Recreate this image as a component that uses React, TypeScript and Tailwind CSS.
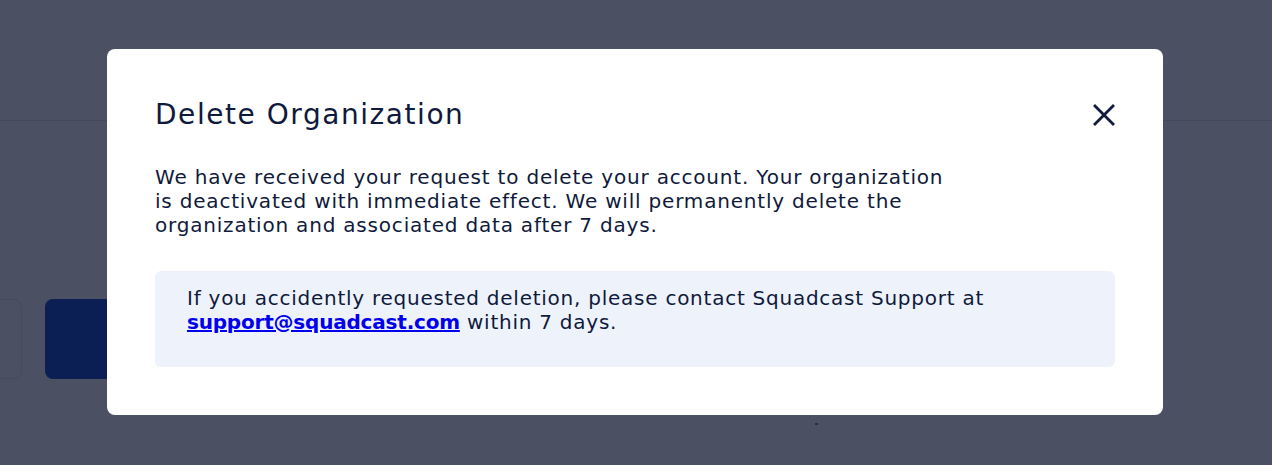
export default function App() {
  return (
    <div className="relative w-[1272px] h-[465px] overflow-hidden bg-[#4b5063] font-['DejaVu_Sans',sans-serif]">
      {/* page behind the overlay */}
      <div className="h-[121px] border-b border-[#444a5b]" />
      <div className="flex gap-[23px] pt-[178px] -ml-[60px]">
        <div className="w-[82px] h-[80px] rounded-[8px] border border-[#454a5c]" />
        <div className="w-[200px] h-[80px] rounded-[8px] bg-[#0b1f55]" />
      </div>
      <div className="absolute left-[815px] top-[423px] w-[3px] h-[2px] bg-[#2c3140]" />

      {/* modal */}
      <div className="absolute left-[107px] top-[49px] w-[1056px] h-[366px] rounded-[8px] bg-white px-[48px] pt-[48px]">
        <div className="flex items-center justify-between">
          <h2 className="text-[28px] leading-[36px] tracking-[1.55px] text-[#0f1a3c]">Delete Organization</h2>
          <button className="text-[#0f1a3c]">
            <svg width="22" height="22" viewBox="0 0 22 22" fill="none" stroke="currentColor" strokeWidth="2.8" strokeLinecap="square">
              <path d="M2 2l18 18M20 2L2 20" />
            </svg>
          </button>
        </div>
        <p className="mt-[32px] text-[20px] leading-[24px] tracking-[0.8px] text-[#0f1a3c]">
          We have received your request to delete your account. Your organization
          <br />
          is deactivated with immediate effect. We will permanently delete the
          <br />
          organization and associated data after 7 days.
        </p>
        <div className="mt-[34px] rounded-[6px] bg-[#eef3fb] pl-[32px] pr-[32px] pt-[15px] pb-[33px] text-[20px] leading-[24px] tracking-[0.75px] text-[#0f1a3c]">
          If you accidently requested deletion, please contact Squadcast Support at
          <br />
          <a href="mailto:support@squadcast.com" className="font-bold tracking-[-0.2px] text-[#0000ee] underline">
            support@squadcast.com
          </a>{" "}
          within 7 days.
        </div>
      </div>
    </div>
  );
}
